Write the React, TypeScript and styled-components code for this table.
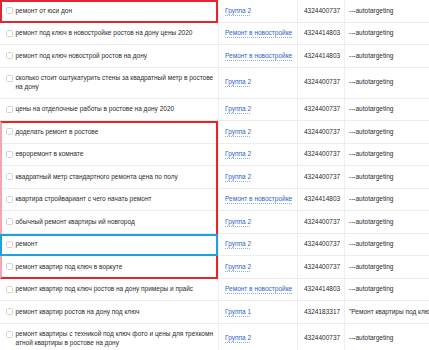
import styled, { createGlobalStyle } from "styled-components";

const GlobalStyle = createGlobalStyle`
  html, body {
    margin: 0;
    padding: 0;
    background: #ffffff;
  }
  body {
    font-family: "Liberation Sans", Arial, sans-serif;
    overflow: hidden;
  }
`;

type Mark = 'red' | 'blue';

type Phrase = {
    text: string;
    group: string;
    id: string;
    target?: string;
    mark?: Mark;
};

const head: Phrase[] = [
    { text: 'ремонт от юси дон', group: 'Группа 2', id: '4324400737', mark: 'red' },
    { text: 'ремонт под ключ в новостройке ростов на дону цены 2020', group: 'Ремонт в новостройке', id: '4324414803' },
    { text: 'ремонт под ключ новострой ростов на дону', group: 'Ремонт в новостройке', id: '4324414803' },
    { text: 'сколько стоит оштукатурить стены за квадратный метр в ростове на дону', group: 'Группа 2', id: '4324400737' },
    { text: 'цены на отделочные работы в ростове на дону 2020', group: 'Группа 2', id: '4324400737' },
];

const marked: Phrase[] = [
    { text: 'доделать ремонт в ростове', group: 'Группа 2', id: '4324400737' },
    { text: 'евроремонт в комнате', group: 'Группа 2', id: '4324400737' },
    { text: 'квадратный метр стандартного ремонта цена по полу', group: 'Группа 2', id: '4324400737' },
    { text: 'квартира стройвариант с чего начать ремонт', group: 'Ремонт в новостройке', id: '4324414803' },
    { text: 'обычный ремонт квартиры ий новгород', group: 'Группа 2', id: '4324400737' },
    { text: 'ремонт', group: 'Группа 2', id: '4324400737', mark: 'blue' },
    { text: 'ремонт квартир под ключ в воркуте', group: 'Группа 2', id: '4324400737' },
];

const tail: Phrase[] = [
    { text: 'ремонт квартир под ключ ростов на дону примеры и прайс', group: 'Ремонт в новостройке', id: '4324414803' },
    { text: 'ремонт квартир ростов на дону под ключ', group: 'Группа 1', id: '4324183317', target: '"Ремонт квартиры под ключ в Ростове-на-Дону"' },
    { text: 'ремонт квартиры с техникой под ключ фото и цены для трехкомнатной квартиры в ростове на дону', group: 'Группа 2', id: '4324400737' },
];

const markColor = (m?: Mark) => (m === 'blue' ? '#1aa2e2' : '#e4252d');

const PhraseRow = function({ p }: { p: Phrase }) {
    return (
        <Row $mark={p.mark}>
            <PhraseCell>
                <Check />
                <PhraseText>{p.text}</PhraseText>
            </PhraseCell>
            <Cell>
                <GroupLink>{p.group}</GroupLink>
            </Cell>
            <Cell>{p.id}</Cell>
            <TargetCell>{p.target ?? '---autotargeting'}</TargetCell>
        </Row>
    );
};

const App = function() {
    return (
        <>
            <GlobalStyle />
            <Table>
                {head.map((p) => <PhraseRow key={p.text} p={p} />)}
                <Bracket>
                    {marked.map((p) => <PhraseRow key={p.text} p={p} />)}
                </Bracket>
                {tail.map((p) => <PhraseRow key={p.text} p={p} />)}
            </Table>
        </>
    );
};

export default App;

const Table = styled.div`
    width: 429px;
    height: 350px;
    overflow: hidden;
    font-size: 6.5px;
    line-height: 8.5px;
    color: #2b2b2b;
`;

const Row = styled.div<{ $mark?: Mark }>`
    position: relative;
    display: grid;
    grid-template-columns: 219px 79px 47px 1fr;
    border-bottom: 1px solid #ececec;

    ${({ $mark }) => $mark && `
        &::after {
            content: '';
            position: absolute;
            left: 0;
            top: 0;
            bottom: -1px;
            width: 218px;
            box-sizing: border-box;
            border: 2px solid ${markColor($mark)};
            pointer-events: none;
            z-index: 2;
        }
    `}
`;

const Bracket = styled.div`
    position: relative;

    &::after {
        content: '';
        position: absolute;
        left: 0;
        top: 0;
        bottom: 0;
        width: 218px;
        box-sizing: border-box;
        border: 2px solid #e4252d;
        border-left-color: #f6a6aa;
        pointer-events: none;
        z-index: 1;
    }
`;

const Cell = styled.div`
    display: flex;
    align-items: center;
    padding: 6.5px 4px 6.5px 6px;
    border-right: 1px solid #efefef;
    white-space: nowrap;
    overflow: hidden;
`;

const PhraseCell = styled(Cell)`
    align-items: flex-start;
    align-self: center;
    gap: 2.5px;
    padding-left: 6px;
    padding-right: 3.5px;
    white-space: normal;
`;

const TargetCell = styled(Cell)`
    border-right: none;
    padding-left: 4px;
`;

const Check = styled.span`
    flex: none;
    width: 7px;
    height: 7px;
    margin-top: 0.5px;
    box-sizing: border-box;
    border: 1px solid #d3d3d3;
    border-radius: 1.5px;
    background: #fff;
`;

const PhraseText = styled.span`
    flex: 1;
    word-break: break-all;
`;

const GroupLink = styled.span`
    color: #2f63cc;
    text-decoration: underline dotted #8eaee6;
    text-underline-offset: 2px;
    text-decoration-thickness: 1px;
`;
